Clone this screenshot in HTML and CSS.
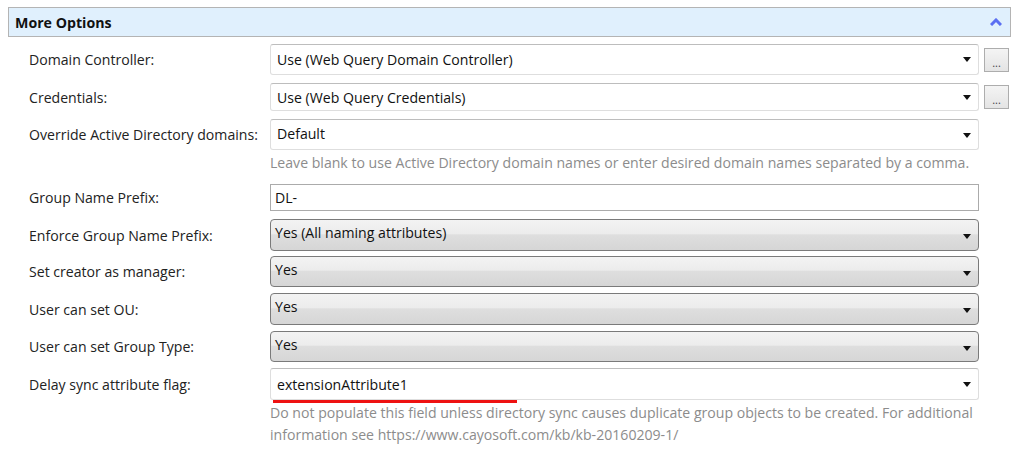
FILE: index.html
```html
<!DOCTYPE html>
<html>
<head>
<meta charset="utf-8">
<link rel="stylesheet" href="styles.css">
</head>
<body>
<div class="panel">
  <div class="panel-head">
    <span class="panel-title">More Options</span>
    <svg class="chev" width="12" height="8" viewBox="0 0 12 8"><path d="M1 7 L6 2 L11 7" fill="none" stroke="#5b6ff2" stroke-width="3"/></svg>
  </div>
  <div class="form">
    <div class="row r1">
      <label class="lbl">Domain Controller:</label>
      <div class="select plain h31"><span class="val">Use (Web Query Domain Controller)</span><span class="caret"></span></div>
      <button class="more">...</button>
    </div>
    <div class="row r2">
      <label class="lbl">Credentials:</label>
      <div class="select plain h28"><span class="val">Use (Web Query Credentials)</span><span class="caret"></span></div>
      <button class="more">...</button>
    </div>
    <div class="row r3">
      <label class="lbl">Override Active Directory domains:</label>
      <div class="select plain h31 top"><span class="val">Default</span><span class="caret"></span></div>
    </div>
    <div class="help h1">Leave blank to use Active Directory domain names or enter desired domain names separated by a comma.</div>
    <div class="row r4">
      <label class="lbl">Group Name Prefix:</label>
      <div class="textbox">DL-</div>
    </div>
    <div class="row r5">
      <label class="lbl">Enforce Group Name Prefix:</label>
      <div class="select shaded h32"><span class="val">Yes (All naming attributes)</span><span class="caret"></span></div>
    </div>
    <div class="row r6">
      <label class="lbl">Set creator as manager:</label>
      <div class="select shaded h31"><span class="val">Yes</span><span class="caret"></span></div>
    </div>
    <div class="row r7">
      <label class="lbl">User can set OU:</label>
      <div class="select shaded h32"><span class="val">Yes</span><span class="caret"></span></div>
    </div>
    <div class="row r8">
      <label class="lbl">User can set Group Type:</label>
      <div class="select shaded h31"><span class="val">Yes</span><span class="caret"></span></div>
    </div>
    <div class="row r9">
      <label class="lbl">Delay sync attribute flag:</label>
      <div class="select plain h32 flagged"><span class="val">extensionAttribute1</span><span class="caret"></span><span class="squiggle"></span></div>
    </div>
    <div class="help h2">Do not populate this field unless directory sync causes duplicate group objects to be created. For additional<br>information see https://www.cayosoft.com/kb/kb-20160209-1/</div>
  </div>
</div>
</body>
</html>
```

FILE: styles.css
```css
html, body {
  margin: 0;
  padding: 0;
  background: #ffffff;
}

body {
  font-family: "Open Sans", "Noto Sans", "Liberation Sans", sans-serif;
  font-size: 14.1px;
  color: #1e1e1e;
}

.panel {
  margin: 7px 10px 0 8px;
}

.panel-head {
  height: 28px;
  border: 1px solid #b4b4b4;
  background: #e0f0fd;
  display: flex;
  align-items: center;
  justify-content: space-between;
  padding: 0 8px 0 6px;
}

.panel-title {
  font-weight: bold;
  font-size: 14.2px;
  color: #111;
}

.chev {
  display: block;
}

.form {
  padding-left: 21px;
}

.row {
  display: grid;
  grid-template-columns: 241px 709px auto;
  align-items: center;
}

.lbl {
  color: #222;
}

.r1 { margin-top: 7px; }
.r2 { margin-top: 8px; }
.r3 { margin-top: 8px; }
.r4 { margin-top: 11px; }
.r5 { margin-top: 8px; }
.r6 { margin-top: 5px; }
.r7 { margin-top: 6px; }
.r8 { margin-top: 6px; }
.r9 { margin-top: 6px; }

.h28 { height: 28px; }
.h31 { height: 31px; }
.h32 { height: 32px; }

.select {
  box-sizing: border-box;
  position: relative;
  display: flex;
  align-items: center;
  justify-content: space-between;
  padding: 0 7px 0 6px;
  color: #111;
}

.select.plain {
  background: #fff;
  border: 1px solid #dedede;
  border-top-color: #bdbdbd;
  border-radius: 3px;
}

.select.plain.top {
  align-items: flex-start;
  padding-top: 4px;
}

.select.plain.top .caret {
  margin-top: 9px;
}

.select.shaded {
  border: 1px solid #7a7a7a;
  border-radius: 4px;
  background: linear-gradient(#f3f3f3 0%, #ececec 45%, #dedede 50%, #d6d6d6 100%);
  align-items: flex-start;
  padding-top: 3px;
  padding-left: 4px;
}

.select.shaded .caret {
  margin-top: 11px;
}

.caret {
  width: 0;
  height: 0;
  border-left: 4px solid transparent;
  border-right: 4px solid transparent;
  border-top: 5px solid #111;
}

.squiggle {
  position: absolute;
  left: 2px;
  bottom: -4px;
  width: 244px;
  height: 3px;
  background: #ee1111;
}

.more {
  box-sizing: border-box;
  margin-left: 5px;
  width: 25px;
  height: 24px;
  padding: 0 0 3px;
  border: 1px solid #adadad;
  background: linear-gradient(#f4f4f4, #e4e4e4);
  font-family: inherit;
  font-size: 11px;
  line-height: 1;
  color: #444;
  display: flex;
  align-items: flex-end;
  justify-content: center;
}

.textbox {
  box-sizing: border-box;
  height: 27px;
  border: 1px solid #ababab;
  background: #fff;
  padding: 0 4px;
  display: flex;
  align-items: center;
  color: #111;
}

.help {
  margin-left: 241px;
  color: #8c8c8c;
  white-space: nowrap;
}

.h1 {
  margin-top: 3px;
  line-height: 20px;
}

.h2 {
  padding-top: 2px;
  line-height: 22px;
}
```
